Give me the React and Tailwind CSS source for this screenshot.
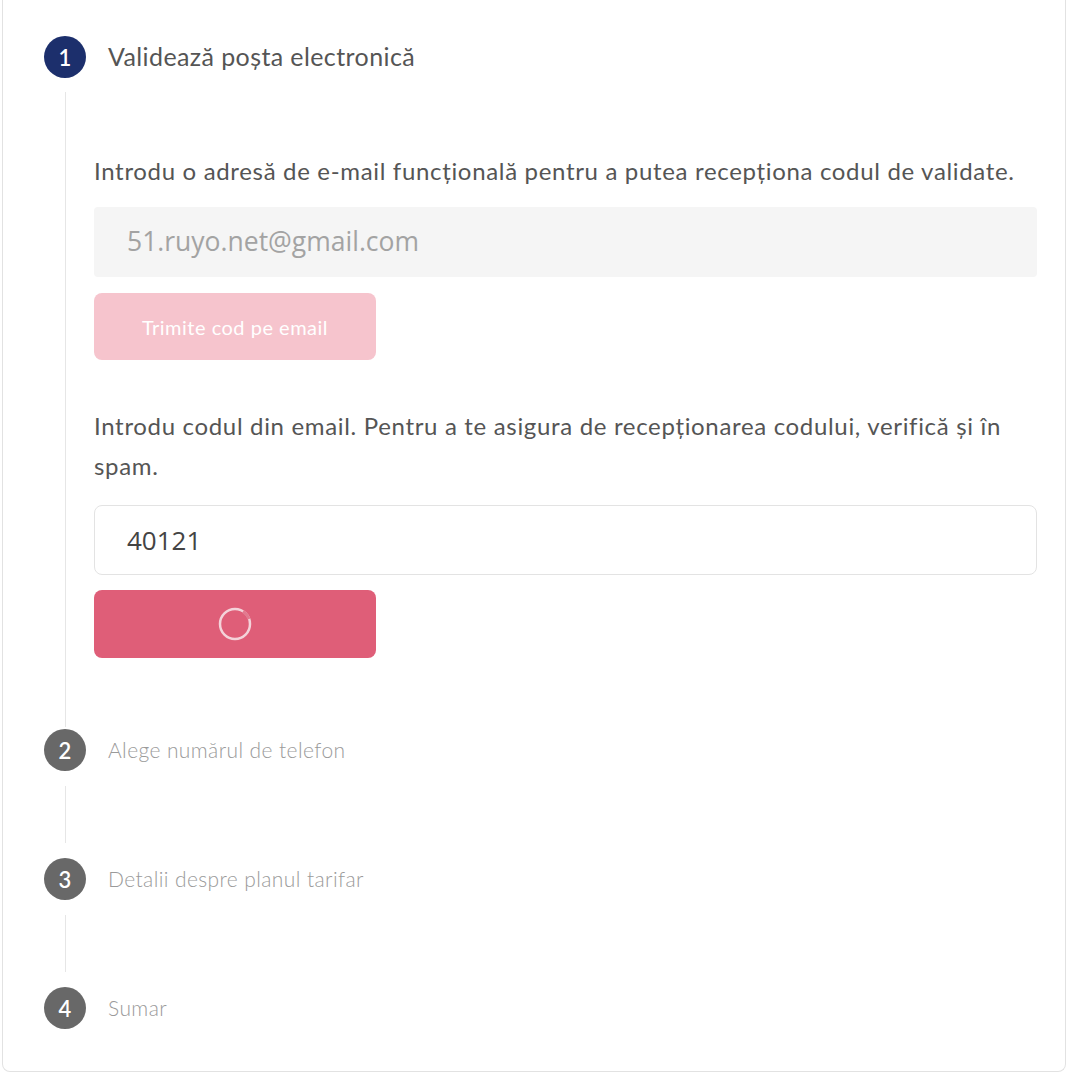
import React from 'react';

const futura = { fontFamily: '"Lato", "Noto Sans", sans-serif' };
const system = { fontFamily: '"Open Sans", "Noto Sans", sans-serif' };

function Circle({ n, active }) {
    return (
        <div
            className={`w-[42px] h-[42px] rounded-full flex items-center justify-center text-white text-[22px] font-semibold shrink-0 ${active ? 'bg-[#1c2f6c]' : 'bg-[#686868]'}`}
            style={futura}
        >
            {n}
        </div>
    );
}

function Spinner() {
    return (
        <svg width="36" height="36" viewBox="0 0 36 36">
            <circle cx="18" cy="18" r="15" fill="none" stroke="#f4d3da" strokeWidth="2.5" />
            <path d="M26 5.5 A15 15 0 0 1 32 13" fill="none" stroke="#e27a8f" strokeWidth="3" />
        </svg>
    );
}

export default function App() {
    const steps = [
        { n: 2, label: 'Alege numărul de telefon' },
        { n: 3, label: 'Detalii despre planul tarifar' },
        { n: 4, label: 'Sumar' },
    ];

    return (
        <div className="w-[1070px] h-[1080px] bg-white overflow-hidden">
            <div className="ml-[2px] w-[1064px] h-[1072px] border-x border-b border-[#e2e2e2] rounded-b-lg pl-[41px] pr-[28px] pt-[36px]">
                {/* Step 1: active */}
                <div className="flex">
                    <div className="flex flex-col items-center w-[42px]">
                        <Circle n="1" active />
                        <div className="w-px flex-1 bg-[#e6e6e6] mt-[14px] mb-[2px]" />
                    </div>
                    <div className="flex-1 ml-[8px]">
                        <div className="h-[42px] flex items-center pl-[14px] text-[25px] tracking-[0.4px] text-[#555]" style={futura}>
                            Validează poșta electronică
                        </div>
                        <p className="mt-[73px] text-[24px] leading-[40px] tracking-[0.67px] text-[#555]" style={futura}>
                            Introdu o adresă de e-mail funcțională pentru a putea recepționa codul de validate.
                        </p>
                        <div
                            className="mt-[16px] h-[70px] bg-[#f5f5f5] rounded flex items-center px-[33px] text-[26.5px] text-[#a3a3a3]"
                            style={system}
                        >
                            51.ruyo.net@gmail.com
                        </div>
                        <button className="mt-[16px] w-[282px] h-[67px] rounded-lg bg-[#f6c4cd] text-white text-[20px] tracking-[0.5px]" style={futura}>
                            Trimite cod pe email
                        </button>
                        <p className="mt-[46px] text-[24px] leading-[40px] tracking-[0.67px] text-[#555]" style={futura}>
                            Introdu codul din email. Pentru a te asigura de recepționarea codului, verifică și în spam.
                        </p>
                        <div
                            className="mt-[19px] h-[70px] bg-white border border-[#e3e3e3] rounded-lg flex items-center px-[32px] text-[26px] text-[#444]"
                            style={system}
                        >
                            40121
                        </div>
                        <button className="mt-[15px] w-[282px] h-[68px] rounded-lg bg-[#df5e78] flex items-center justify-center">
                            <Spinner />
                        </button>
                        <div className="h-[71px]" />
                    </div>
                </div>

                {/* Remaining steps */}
                {steps.map((s, i) => (
                    <div key={s.n} className="flex">
                        <div className="flex flex-col items-center w-[42px]">
                            <Circle n={s.n} />
                            {i < steps.length - 1 && <div className="w-px h-[57px] bg-[#e6e6e6] my-[15px]" />}
                        </div>
                        <div className="h-[42px] flex items-center pl-[22px] text-[21px] font-light tracking-[0.4px] text-[#9a9a9a]" style={futura}>
                            {s.label}
                        </div>
                    </div>
                ))}
            </div>
        </div>
    );
}
